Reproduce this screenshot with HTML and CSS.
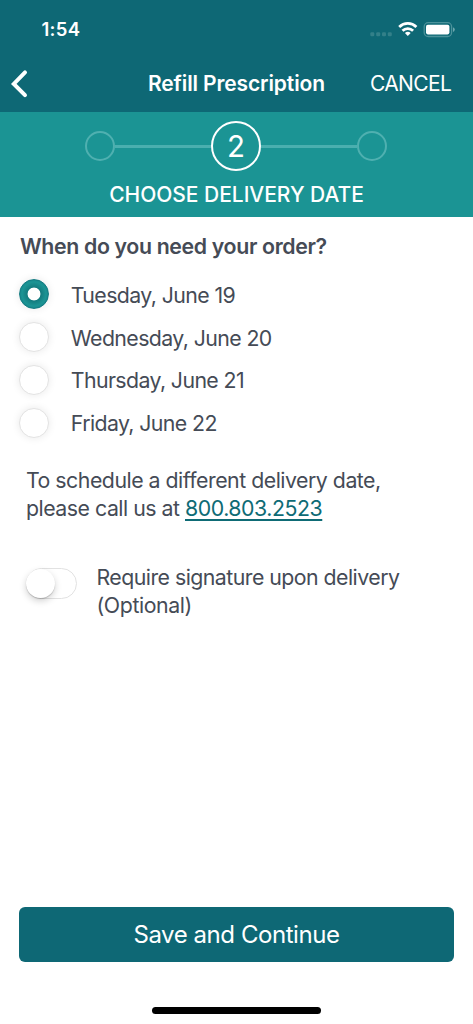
FILE: index.html
```html
<!DOCTYPE html>
<html lang="en">
<head>
<meta charset="utf-8">
<title>Refill Prescription</title>
<link rel="stylesheet" href="styles.css">
</head>
<body>
<div class="screen">
  <header class="header">
    <div class="status">
      <span class="time">1:54</span>
      <svg class="indicators" width="86" height="18" viewBox="0 0 86 18">
        <g fill="#338089"><rect x="0.3" y="10.2" width="4" height="4" rx="1.2"/><rect x="6.2" y="10.2" width="4" height="4" rx="1.2"/><rect x="12" y="10.2" width="4" height="4" rx="1.2"/><rect x="17.8" y="10.2" width="4" height="4" rx="1.2"/></g>
        <g fill="none" stroke="#fff" stroke-width="2.8"><path d="M29.2 4.9a12.4 12.4 0 0 1 17.2 0"/><path d="M32.5 8.7a7.6 7.6 0 0 1 10.6 0"/></g>
        <path d="M37.8 14L34.9 11.1a4.1 4.1 0 0 1 5.8 0z" fill="#fff"/>
        <rect x="54.2" y="0.7" width="27.4" height="13.8" rx="4" fill="none" stroke="#4b929b" stroke-width="1.3"/>
        <rect x="56" y="2.7" width="23.4" height="9.7" rx="1.8" fill="#fff"/>
        <path d="M83 5.2q1.8 .7 1.8 2.4t-1.8 2.4z" fill="#6da6ad"/>
      </svg>
    </div>
    <nav class="nav">
      <svg class="back" width="20" height="30" viewBox="0 0 20 30"><path d="M17 3.4L5.8 14.9L17 26.2" fill="none" stroke="#fff" stroke-width="4" stroke-linecap="round" stroke-linejoin="miter"/></svg>
      <h1 class="title">Refill Prescription</h1>
      <span class="cancel">CANCEL</span>
    </nav>
  </header>
  <section class="steps">
    <div class="track">
      <span class="dot"></span><span class="line"></span>
      <span class="current"><span class="number">2</span></span>
      <span class="line"></span><span class="dot"></span>
    </div>
    <div class="step-name"><span>CHOOSE DELIVERY DATE</span></div>
  </section>
  <main class="content">
    <h2 class="question">When do you need your order?</h2>
    <div class="options">
      <div class="option"><span class="radio selected"></span><span class="day">Tuesday, June 19</span></div>
      <div class="option"><span class="radio"></span><span class="day">Wednesday, June 20</span></div>
      <div class="option"><span class="radio"></span><span class="day">Thursday, June 21</span></div>
      <div class="option"><span class="radio"></span><span class="day">Friday, June 22</span></div>
    </div>
    <p class="help">To schedule a different delivery date,<br>please call us at <a class="phone">800.803.2523</a></p>
    <div class="signature">
      <span class="toggle"><span class="knob"></span></span>
      <p class="label">Require signature upon delivery<br><span class="optional">(Optional)</span></p>
    </div>
  </main>
  <footer class="footer">
    <div class="save"><span>Save and Continue</span></div>
    <div class="home"></div>
  </footer>
</div>
</body>
</html>
```
FILE: styles.css
```css
* { box-sizing: border-box; margin: 0; padding: 0; }
body { background: #fff; font-family: Inter, "Liberation Sans", sans-serif; font-size: 21.3px; color: #454b56; letter-spacing: -0.2px; }
.screen { height: 1024px; display: flex; flex-direction: column; overflow: hidden; white-space: nowrap; }
.header { height: 111.5px; background: #0e6875; color: #fff; }
.status { height: 56px; display: flex; justify-content: space-between; padding: 18px 17px 0 41.5px; }
.time { font-size: 18.5px; font-weight: 600; line-height: 23px; letter-spacing: 0.3px; }
.indicators { margin-top: 4px; display: block; }
.nav { height: 55px; display: flex; align-items: center; padding: 0 20px 0 7.8px; }
.back { flex: none; }
.title { font-size: 21px; font-weight: 600; margin-left: 120.2px; width: 222px; letter-spacing: -0.12px; }
.cancel { font-size: 21px; letter-spacing: -0.65px; }
.steps { height: 105.5px; background: #1b9494; color: #fff; padding-top: 9.7px; }
.track { display: flex; align-items: center; justify-content: center; margin-right: 1px; }
.dot { width: 30px; height: 30px; border: 2px solid #4fb0b0; border-radius: 50%; }
.line { width: 96px; height: 3px; background: #4aafaf; }
.current { width: 50px; height: 50px; border: 2.4px solid #fff; border-radius: 50%; display: flex; align-items: center; justify-content: center; font-size: 29.5px; }
.step-name { text-align: center; font-size: 21px; font-weight: 500; line-height: 28px; margin-top: 10.3px; letter-spacing: -0.03px; }
.content { flex: 1; padding-top: 14.5px; }
.question { font-size: 21.3px; font-weight: 600; line-height: 28px; margin-left: 20px; letter-spacing: -0.35px; }
.options { margin: 13.5px 0 0 19px; }
.option { height: 42.8px; display: flex; align-items: center; gap: 21.8px; }
.day { letter-spacing: -0.6px; padding-top: 1px; }
.radio { width: 30px; height: 30px; border-radius: 50%; border: 1px solid #e3e3e3; background: #fff; box-shadow: 0 0 8px rgba(0,0,0,.09); }
.radio.selected { border: 1px solid #147b82; background: radial-gradient(circle, #fff 0 6px, #137c7f 6.8px, #1b9494 12px, #178a8d 14px); }
.help { line-height: 28px; margin: 21.5px 0 0 26px; letter-spacing: -0.49px; }
.phone { color: #0e6b75; text-decoration: underline; text-decoration-thickness: 1.5px; text-underline-offset: 3px; text-decoration-skip-ink: none; letter-spacing: -0.45px; }
.signature { display: flex; gap: 19.5px; margin: 41.5px 0 0 26px; }
.toggle { width: 51px; height: 31px; border: 1.5px solid #e2e2e2; border-radius: 16px; margin-top: 4.5px; }
.knob { display: block; width: 29px; height: 29px; margin-left: -1px; border-radius: 50%; background: #fff; box-shadow: 0 3px 7px rgba(0,0,0,.18), 0 1px 1px rgba(0,0,0,.18); }
.label { line-height: 28px; letter-spacing: -0.53px; }
.optional { letter-spacing: -0.4px; }
.footer { height: 117.5px; padding: 0 19px; }
.save { height: 55.5px; border-radius: 6px; background: #0e6875; color: #fff; font-size: 24px; letter-spacing: -0.44px; display: flex; align-items: center; justify-content: center; }
.home { width: 169px; height: 6.4px; border-radius: 4px; background: #000; margin: 45.2px auto 0; }
```
